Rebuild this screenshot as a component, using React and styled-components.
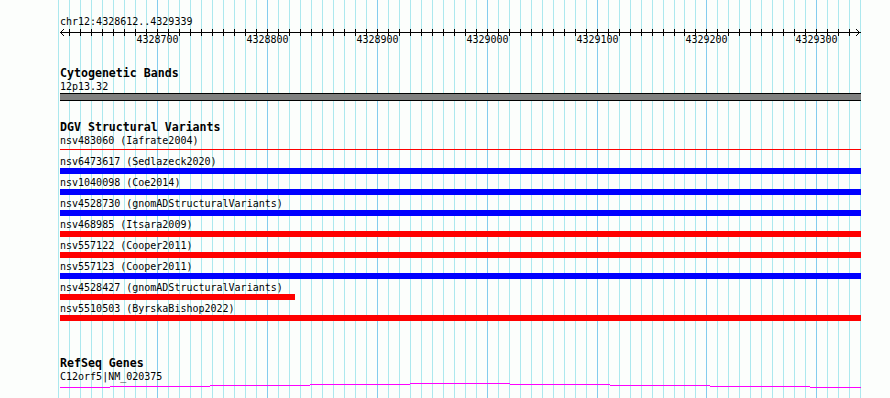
import React from 'react';
import styled, { createGlobalStyle } from 'styled-components';

const BP0 = 4328700;
const X0 = 157.3;
const SCALE = 1.0983;
const LEFT = 60;
const WIDTH = 801;
const xOf = (bp) => X0 + (bp - BP0) * SCALE;

const gridStops = [];
for (let bp = 4328610; bp <= 4329340; bp += 10) gridStops.push(bp);
const majorLabels = [4328700, 4328800, 4328900, 4329000, 4329100, 4329200, 4329300];

const variants = [
  { name: 'nsv483060 (Iafrate2004)', color: '#ff0000', thin: true },
  { name: 'nsv6473617 (Sedlazeck2020)', color: '#0000ff' },
  { name: 'nsv1040098 (Coe2014)', color: '#0000ff' },
  { name: 'nsv4528730 (gnomADStructuralVariants)', color: '#0000ff' },
  { name: 'nsv468985 (Itsara2009)', color: '#ff0000' },
  { name: 'nsv557122 (Cooper2011)', color: '#ff0000' },
  { name: 'nsv557123 (Cooper2011)', color: '#0000ff' },
  { name: 'nsv4528427 (gnomADStructuralVariants)', color: '#ff0000', end: 295 },
  { name: 'nsv5510503 (ByrskaBishop2022)', color: '#ff0000' },
];

// stepped intron line of the gene, one step per 100px tile
const geneSegments = [
  [60, 110, 387], [110, 210, 386], [210, 310, 385], [310, 410, 384], [410, 510, 383],
  [510, 610, 384], [610, 710, 385], [710, 810, 386], [810, 861, 387],
];

const GlobalStyle = createGlobalStyle`
  html, body {
    margin: 0;
    padding: 0;
    background: #fcfefc;
  }
`;

const Page = styled.div`
  position: relative;
  width: 890px;
  height: 398px;
  overflow: hidden;
  background: #fcfefc;
  font-family: "DejaVu Sans Mono", "Liberation Mono", monospace;
  color: #000;
`;

const GridLayer = styled.svg`
  position: absolute;
  left: 0;
  top: 0;
  z-index: 0;
`;

const Tracks = styled.div`
  position: relative;
  z-index: 1;
  display: flex;
  flex-direction: column;
  padding-left: ${LEFT}px;
  width: ${WIDTH}px;
`;

const Ruler = styled.div`
  display: flex;
  flex-direction: column;
  padding-top: 15px;
  height: 52px;
`;

const Label = styled.div`
  font-size: 10px;
  line-height: 13px;
  height: 13px;
  white-space: nowrap;
`;

const Title = styled.div`
  font-size: 11.6px;
  font-weight: bold;
  line-height: 13px;
  height: 13px;
  white-space: nowrap;
`;

const Track = styled.section`
  display: flex;
  flex-direction: column;
  margin-top: ${(p) => p.$gap}px;
`;

const Band = styled.div`
  height: 6px;
  background: #808080;
  border-top: 1px solid #000;
  border-bottom: 1px solid #000;
`;

const Row = styled.div`
  display: flex;
  flex-direction: column;
  padding-bottom: 2px;
`;

const BarSlot = styled.div`
  height: 6px;
  display: flex;
  align-items: ${(p) => (p.$thin ? 'flex-start' : 'stretch')};
  padding-top: ${(p) => (p.$thin ? 2 : 0)}px;
  box-sizing: border-box;
`;

const Bar = styled.div`
  background: ${(p) => p.$color};
  height: ${(p) => (p.$thin ? '1px' : 'auto')};
`;

const Axis = () => (
  <svg width={WIDTH} height={19} style={{ display: 'block' }} shapeRendering="crispEdges">
    <rect x={0} y={4} width={WIDTH} height={1} fill="#000" />
    {gridStops.map((bp) => {
      const x = Math.round(xOf(bp)) - LEFT;
      if (x < 2 || x > WIDTH - 3) return null;
      return <rect key={bp} x={x} y={1} width={1} height={7} fill="#000" />;
    })}
    <polyline points="4,1 0.5,4.5 4,8" fill="none" stroke="#000" strokeWidth="1" />
    <polyline points={`${WIDTH - 5},1 ${WIDTH - 1.5},4.5 ${WIDTH - 5},8`} fill="none" stroke="#000" strokeWidth="1" />
    {majorLabels.map((bp) => (
      <text
        key={bp}
        x={Math.round(xOf(bp)) - LEFT + 0.5}
        y={15}
        textAnchor="middle"
        fontSize="10"
        fontFamily="DejaVu Sans Mono, monospace"
        fill="#000"
      >
        {bp}
      </text>
    ))}
  </svg>
);

const GeneLine = () => (
  <svg width={WIDTH} height={6} style={{ display: 'block' }} shapeRendering="crispEdges">
    {geneSegments.map(([a, b, y]) => (
      <rect key={a} x={a - LEFT} y={y - 383} width={b - a} height={1} fill="#ff00ff" />
    ))}
  </svg>
);

export default function App() {
  return (
    <Page>
      <GlobalStyle />
      <GridLayer width={890} height={398} shapeRendering="crispEdges">
        {gridStops.map((bp) => {
          const x = Math.round(xOf(bp));
          const major = bp % 100 === 0;
          return (
            <rect key={bp} x={x} y={0} width={1} height={398} fill={major ? '#84ccee' : '#ace8ee'} />
          );
        })}
      </GridLayer>
      <Tracks>
        <Ruler>
          <Label>chr12:4328612..4329339</Label>
          <Axis />
        </Ruler>

        <Track $gap={0}>
          <Title>Cytogenetic Bands</Title>
          <Label>12p13.32</Label>
          <Band />
        </Track>

        <Track $gap={20}>
          <Title>DGV Structural Variants</Title>
          {variants.map((v) => (
            <Row key={v.name}>
              <Label>{v.name}</Label>
              <BarSlot $thin={v.thin}>
                <Bar
                  $color={v.color}
                  $thin={v.thin}
                  style={{ width: (v.end ? v.end - LEFT : WIDTH) + 'px' }}
                />
              </BarSlot>
            </Row>
          ))}
        </Track>

        <Track $gap={34}>
          <Title>RefSeq Genes</Title>
          <Label>C12orf5|NM_020375</Label>
          <GeneLine />
        </Track>
      </Tracks>
    </Page>
  );
}
